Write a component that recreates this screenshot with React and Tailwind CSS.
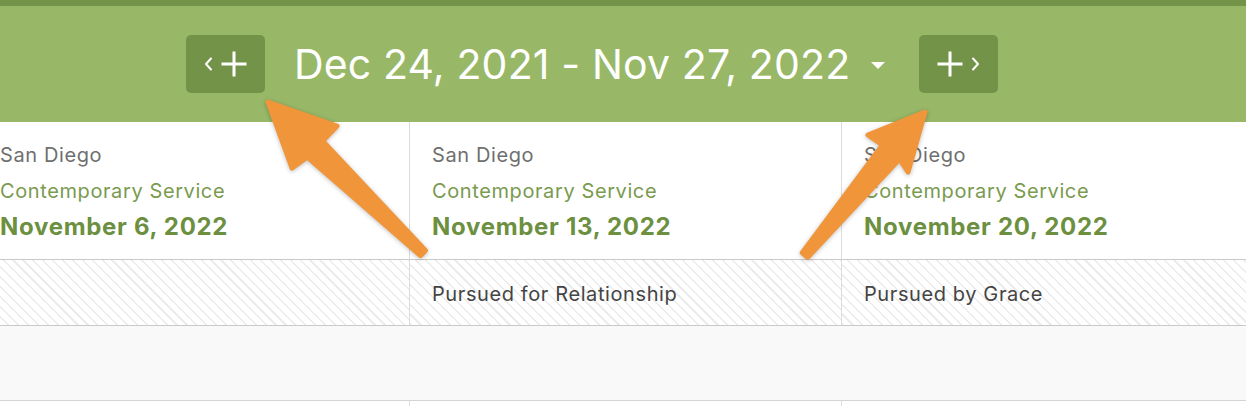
import React from "react";

function Chevron({ dir }) {
  return (
    <svg width="9" height="14" viewBox="0 0 9 14" fill="none">
      {dir === "left" ? (
        <path d="M7 1.5L2 7l5 5.5" stroke="white" strokeWidth="2" strokeLinecap="round" strokeLinejoin="round" />
      ) : (
        <path d="M2 1.5L7 7l-5 5.5" stroke="white" strokeWidth="2" strokeLinecap="round" strokeLinejoin="round" />
      )}
    </svg>
  );
}

function Plus() {
  return (
    <svg width="26" height="26" viewBox="0 0 26 26">
      <path d="M13 0.5V25.5M0.5 13H25.5" stroke="white" strokeWidth="3" />
    </svg>
  );
}

function NavButton({ dir }) {
  return (
    <button className="flex h-[58px] w-[79px] items-center justify-center gap-[8px] rounded-[5px] bg-[#739448]">
      {dir === "left" ? (
        <>
          <Chevron dir="left" />
          <Plus />
        </>
      ) : (
        <>
          <Plus />
          <Chevron dir="right" />
        </>
      )}
    </button>
  );
}

const columns = [
  { date: "November 6, 2022", sermon: "" },
  { date: "November 13, 2022", sermon: "Pursued for Relationship" },
  { date: "November 20, 2022", sermon: "Pursued by Grace" },
];

const hatch =
  "bg-[repeating-linear-gradient(45deg,#ececec_0px,#ececec_1.5px,#ffffff_1.5px,#ffffff_7px)]";

export default function App() {
  return (
    <div className="relative h-[406px] w-[1246px] overflow-hidden bg-white font-['Inter',sans-serif]">
      <div className="h-[6px] bg-[#739448]" />
      <header className="flex h-[116px] items-center bg-[#98b868] pl-[186px]">
        <NavButton dir="left" />
        <div className="ml-[29px] text-[41px] leading-none tracking-[0.15px] text-white">
          Dec 24, 2021 - Nov 27, 2022
        </div>
        <svg className="ml-[21px] mt-[2px]" width="14" height="7" viewBox="0 0 14 7">
          <path d="M0 0h14L7 7z" fill="white" />
        </svg>
        <div className="ml-[34px]">
          <NavButton dir="right" />
        </div>
      </header>

      <div className="ml-[-22px] grid w-[1296px] grid-cols-[432px_432px_432px]">
        {columns.map((c, i) => (
          <div key={i} className="flex h-[138px] flex-col border-b border-r border-b-[#c9c9c9] border-r-[#dcdcdc] pl-[22px] pt-[20px]">
            <div className="text-[20px] leading-[26px] tracking-[0.6px] text-[#6f6f6f]">San Diego</div>
            <div className="mt-[10px] text-[20px] leading-[26px] tracking-[0.6px] text-[#7a9a50]">Contemporary Service</div>
            <div className="mt-[10px] text-[24px] font-bold leading-[26px] tracking-[0.7px] text-[#6c8f40]">{c.date}</div>
          </div>
        ))}
        {columns.map((c, i) => (
          <div key={"s" + i} className={`flex h-[66px] items-center border-b border-r border-b-[#c9c9c9] border-r-[#dcdcdc] pl-[22px] pt-[2px] ${hatch}`}>
            <span className="text-[20px] tracking-[0.6px] text-[#444444]">{c.sermon}</span>
          </div>
        ))}
        <div className="col-span-3 h-[75px] border-b border-b-[#d4d4d4] bg-[#f9f9f9]" />
        {columns.map((c, i) => (
          <div key={"e" + i} className="h-[20px] border-r border-r-[#dcdcdc]" />
        ))}
      </div>

      <svg className="pointer-events-none absolute left-0 top-0 drop-shadow-[0_1px_2px_rgba(0,0,0,0.25)]" width="1246" height="406" viewBox="0 0 1246 406">
        <polygon
          points="268,102 337,126 322.6,141 425.4,250.5 420.6,255.5 307.4,157 292,168"
          fill="#f0953a"
          stroke="#f0953a"
          strokeWidth="5"
          strokeLinejoin="round"
        />
        <polygon
          points="925,112 908,172 899.5,159 807.7,257.2 802.3,252.8 882.5,145 868,135"
          fill="#f0953a"
          stroke="#f0953a"
          strokeWidth="5"
          strokeLinejoin="round"
        />
      </svg>
    </div>
  );
}
